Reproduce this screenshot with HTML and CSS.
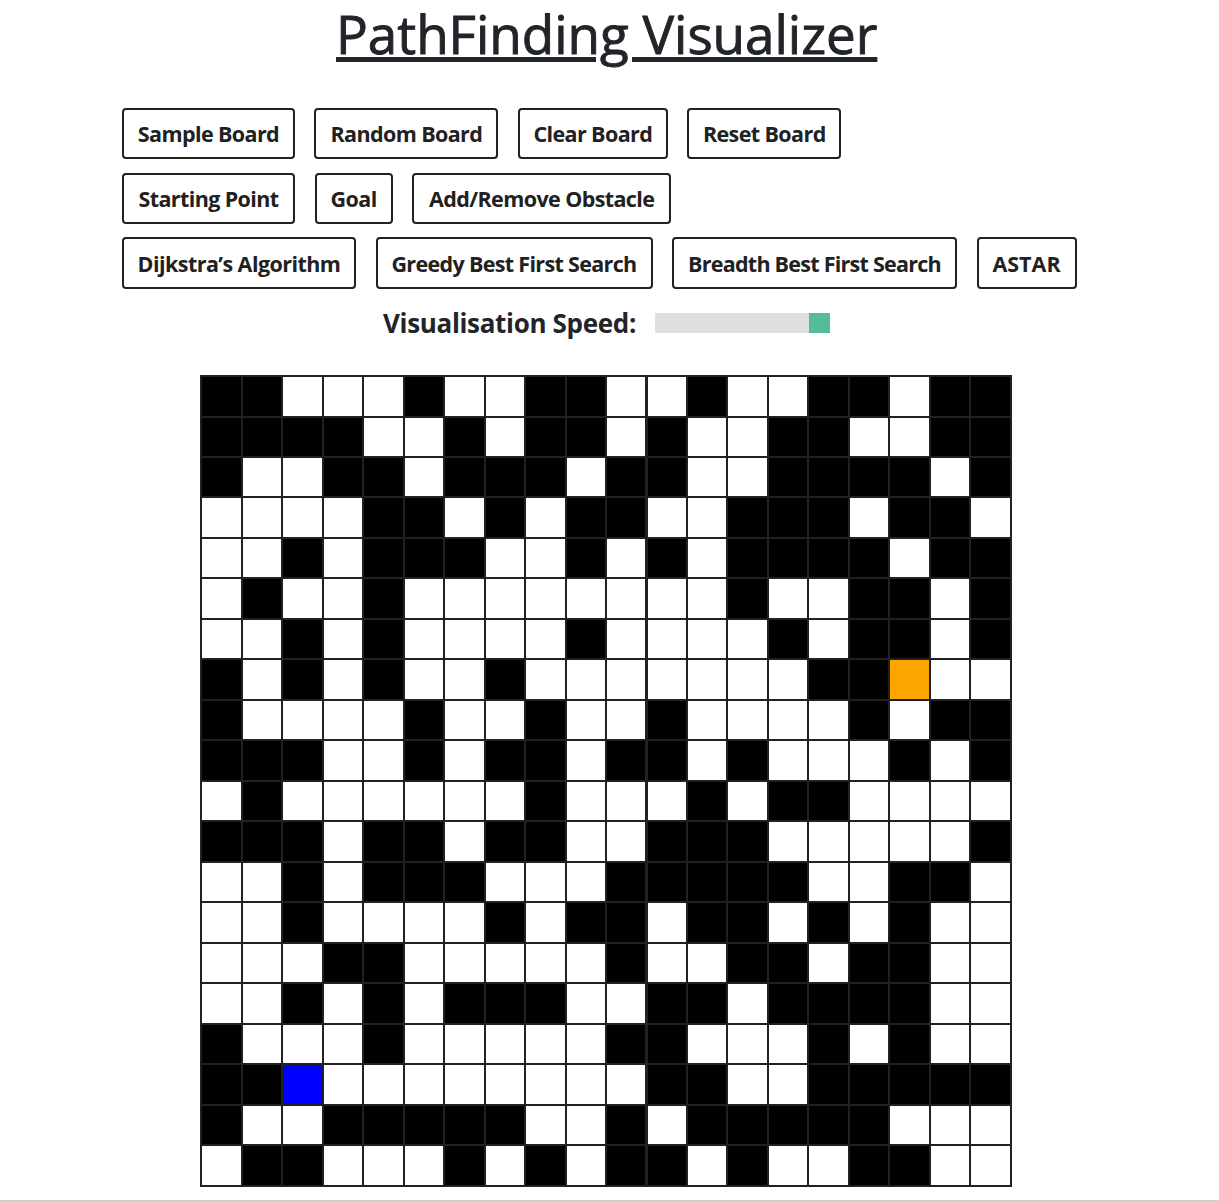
FILE: index.html
```html
<!DOCTYPE html>
<html lang="en">
<head>
<meta charset="utf-8">
<title>PathFinding Visualizer</title>
<link rel="stylesheet" href="styles.css">
</head>
<body>
<main class="page">
  <h1 class="title">PathFinding Visualizer</h1>
  <div class="toolbar">
    <div class="row">
      <button class="btn sample">Sample Board</button>
      <button class="btn random">Random Board</button>
      <button class="btn clear">Clear Board</button>
      <button class="btn reset">Reset Board</button>
    </div>
    <div class="row">
      <button class="btn start-point">Starting Point</button>
      <button class="btn goal-point">Goal</button>
      <button class="btn obstacle">Add/Remove Obstacle</button>
    </div>
    <div class="row row-tall">
      <button class="btn dijkstra">Dijkstra’s Algorithm</button>
      <button class="btn greedy">Greedy Best First Search</button>
      <button class="btn breadth">Breadth Best First Search</button>
      <button class="btn astar">ASTAR</button>
    </div>
  </div>
  <div class="speed">
    <label class="speed-label" for="speed">Visualisation Speed:</label>
    <input class="slider" id="speed" type="range" min="1" max="100" value="100">
  </div>
  <div class="board" id="board"></div>
</main>
<script src="app.js"></script>
</body>
</html>
```
FILE: styles.css
```css
* {
  box-sizing: border-box;
}

body {
  margin: 0;
  background: #fff;
  color: #212529;
  font-family: "Open Sans", "Noto Sans", sans-serif;
}

.page {
  height: 1201px;
  border-bottom: 1px solid #ccc;
}

.title {
  width: 560px;
  height: 73px;
  margin: 0 0 35px 336px;
  font-size: 53px;
  font-weight: 500;
  line-height: 68px;
  letter-spacing: -0.03px;
  white-space: nowrap;
  text-decoration: underline;
  text-decoration-thickness: 5px;
  text-underline-offset: 3px;
  -webkit-text-stroke: 0.9px #212529;
}

.toolbar {
  display: flex;
  flex-direction: column;
  gap: 14px;
  height: 181px;
  margin-left: 122px;
}

.row {
  display: flex;
  gap: 19.5px;
  height: 51px;
}

.row-tall {
  height: 52px;
  margin-top: -1px;
}

.btn {
  flex: none;
  padding: 0;
  border: 2px solid #212121;
  border-radius: 4px;
  background: #fff;
  color: #212121;
  font: 700 21.5px/1 "Open Sans", "Noto Sans", sans-serif;
  letter-spacing: -0.6px;
  white-space: nowrap;
}

.row-tall .btn {
  padding-top: 2px;
  letter-spacing: -0.67px;
}

.sample { width: 172.9px; }
.random { width: 183.9px; }
.clear { width: 150px; }
.reset { width: 154px; }
.start-point { width: 173px; }
.goal-point { width: 78.2px; }
.obstacle { width: 259px; }
.row-tall .dijkstra { width: 234px; letter-spacing: -0.55px; }
.greedy { width: 277px; }
.row-tall .breadth { width: 285px; letter-spacing: -0.74px; }
.row-tall .astar { width: 100px; letter-spacing: 0; }

.speed {
  display: flex;
  align-items: center;
  height: 40px;
  margin: 14px 0 32px 383px;
}

.speed-label {
  width: 272px;
  font-size: 26px;
  font-weight: 700;
  letter-spacing: -0.33px;
  white-space: nowrap;
}

.slider {
  width: 175px;
  height: 20px;
  margin: 0;
  appearance: none;
  background: #dfdfdf;
}

.slider::-webkit-slider-thumb {
  appearance: none;
  width: 21px;
  height: 20px;
  background: #53bd99;
}

.board {
  display: grid;
  grid-template-columns: repeat(5, 39px 38px) repeat(5, 38px 39px);
  grid-template-rows: 39px 38px repeat(9, 38px 39px);
  gap: 2px;
  width: 812px;
  padding: 2px;
  margin-left: 200px;
  background: #212121;
}

.cell {
  background: #fff;
}

.cell:nth-child(20n + 12) {
  border-left: 1px solid #212121;
}

.cell.wall { background: #000; }
.cell.start { background: #00f; }
.cell.goal { background: #ffa500; }
```
FILE: app.js
```js
const layout = [
  "##...#..##..#..##.##",
  "####..#.##.#..##..##",
  "#..##.###.##..####.#",
  "....##.#.##..###.##.",
  "..#.###..#.#.####.##",
  ".#..#........#..##.#",
  "..#.#....#....#.##.#",
  "#.#.#..#.......##G..",
  "#....#..#..#....#.##",
  "###..#.##.##.#...#.#",
  ".#......#...#.##....",
  "###.##.##..###.....#",
  "..#.###...#####..##.",
  "..#....#.##.##.#.#..",
  "...##.....#..##.##..",
  "..#.#.###..##.####..",
  "#...#.....##...#.#..",
  "##S........##..#####",
  "#..#####..#.#####...",
  ".##...#.#.##.#..##.."
];
const kinds = { "#": "wall", S: "start", G: "goal" };
const board = document.getElementById("board");

for (const mark of layout.join("")) {
  const cell = document.createElement("div");
  cell.className = "cell " + (kinds[mark] || "");
  board.append(cell);
}
```
